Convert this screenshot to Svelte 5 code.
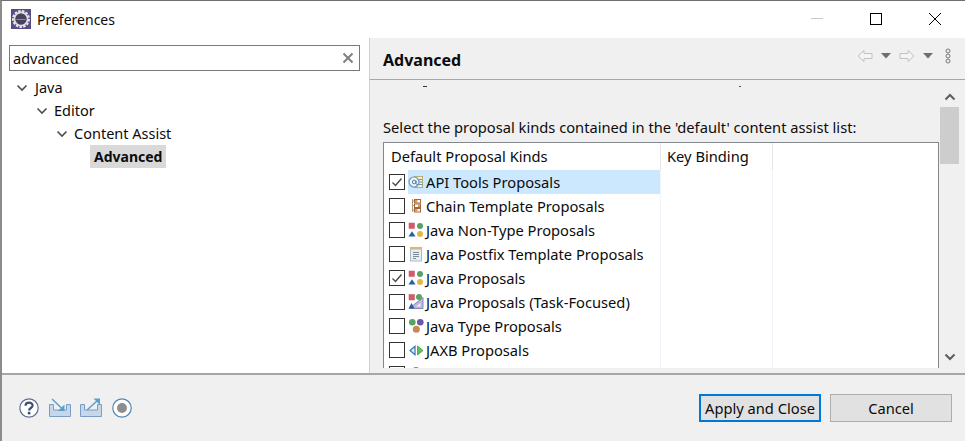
<script>
  const proposals = [
    { label: 'API Tools Proposals', icon: 'api', checked: true, selected: true },
    { label: 'Chain Template Proposals', icon: 'chain' },
    { label: 'Java Non-Type Proposals', icon: 'shapes' },
    { label: 'Java Postfix Template Proposals', icon: 'doc' },
    { label: 'Java Proposals', icon: 'shapes', checked: true },
    { label: 'Java Proposals (Task-Focused)', icon: 'task' },
    { label: 'Java Type Proposals', icon: 'type' },
    { label: 'JAXB Proposals', icon: 'jaxb' },
    { label: '', icon: 'cut' }
  ];
</script>

{#snippet chevron()}
  <svg class="chevron" width="12" height="8" viewBox="0 0 12 8"><path d="M1.5 1.5 6 6l4.5-4.5" fill="none" stroke="#4d4d4d" stroke-width="1.6" /></svg>
{/snippet}

{#snippet icon(name)}
  <svg class="kind" width="16" height="16" viewBox="0 0 16 16">
    {#if name === 'api'}
      <rect x="6.500" y="2.500" width="8" height="11" fill="#f6f1d6" stroke="#b5ad7c" />
      <path d="M8 5.500h6M9 8h5.500M9 10.500h5.500" stroke="#6f94b5" />
      <circle cx="6" cy="8" r="5" fill="#eef5fb" stroke="#6f94b5" stroke-width="1.200" />
      <circle cx="6.200" cy="8" r="1.800" fill="none" stroke="#4f7ca3" />
      <path d="M8 6.500v3c0 1 1 1.200 2 .7" fill="none" stroke="#4f7ca3" />
    {:else if name === 'chain'}
      <path d="M4.500 1v13" stroke="#a89a80" />
      <path d="M4.500 3h2M4.500 7.500h2M4.500 12h2" stroke="#a89a80" />
      <rect x="6.500" y="1.500" width="6" height="3.500" fill="#fff" stroke="#a5673a" />
      <rect x="6.500" y="6" width="6" height="3.500" fill="#fff" stroke="#a5673a" />
      <rect x="6.500" y="10.500" width="6" height="3.500" fill="#fff" stroke="#a5673a" />
      <path d="M7 2h2.500v3H7zM10 6.500h2v2.500h-2zM7 11h2.500v2.500H7z" fill="#dd9a55" />
    {:else if name === 'shapes'}
      <rect x="1" y="1" width="5.500" height="5.500" fill="#dc5a68" stroke="#bb5566" stroke-width="0.500" />
      <circle cx="12" cy="4" r="3" fill="#57a265" />
      <path d="M4 9.200 7.500 14.500H.5z" fill="#1f5ea8" />
      <circle cx="12" cy="12" r="3" fill="#e8b548" />
    {:else if name === 'doc'}
      <rect x="2.500" y="1.500" width="11" height="13.500" fill="#e2edf6" stroke="#aeb9c2" />
      <rect x="2" y="1" width="12" height="2.500" fill="#d5b878" />
      <path d="M5 6.500h6M5 8.500h6M5 10.500h6M5 12.500h3" stroke="#7e8c99" />
    {:else if name === 'task'}
      <path d="M15 3.500V14.500H1z" fill="#bdb8da" stroke="#8d87b8" />
      <path d="M12.500 9v3.500H8z" fill="#f0eff8" />
      <rect x="1" y="0.500" width="5.500" height="5.500" fill="#dc5a68" stroke="#bb5566" stroke-width="0.500" />
      <circle cx="11" cy="3" r="3" fill="#57a265" />
      <path d="M3.500 9 6.500 14.500H.5z" fill="#1f5ea8" />
    {:else if name === 'type'}
      <circle cx="4.300" cy="4.300" r="3.300" fill="#57a265" />
      <circle cx="12.300" cy="4.300" r="3.300" fill="#6a5aa6" />
      <circle cx="8.300" cy="11.300" r="3.500" fill="#c48a50" />
    {:else if name === 'jaxb'}
      <path d="M7 4.200V12.800L2 8.500z" fill="#dcebf6" stroke="#2f74b5" stroke-width="1.200" />
      <path d="M9.500 4V13L15 8.500z" fill="#62c262" stroke="#3f9a3f" stroke-width="0.800" />
    {:else if name === 'cut'}
      <circle cx="8" cy="6" r="4.500" fill="#bcd5ea" stroke="#4f86b5" />
    {/if}
  </svg>
{/snippet}

<div class="window">
  <span class="sliver"></span>

  <header class="titlebar">
    <svg class="app-icon" width="20" height="20" viewBox="0 0 20 20">
      <rect width="20" height="20" fill="#5a4a85" />
      <circle cx="10" cy="10" r="7.500" fill="none" stroke="#e6e6e6" stroke-width="3" stroke-dasharray="2.400 1.200" />
      <circle cx="10" cy="10" r="6.500" fill="none" stroke="#dcdcdc" stroke-width="1.800" />
      <circle cx="10" cy="10" r="5.500" fill="#47435f" />
      <path d="M5.500 10.500h9" stroke="#8a86a8" />
    </svg>
    <span class="title">Preferences</span>
    <div class="controls">
      <svg width="14" height="14" viewBox="0 0 14 14"><path d="M1 6.500h12" stroke="#c9c9c9" /></svg>
      <svg width="14" height="14" viewBox="0 0 14 14"><rect x="1.500" y="1.500" width="11" height="11" fill="none" stroke="#000" /></svg>
      <svg width="14" height="14" viewBox="0 0 14 14"><path d="M1 1l12 12M13 1 1 13" stroke="#000" /></svg>
    </div>
  </header>

  <div class="body">
    <aside class="left">
      <div class="search">
        <span>advanced</span>
        <svg width="12" height="12" viewBox="0 0 12 12"><path d="M1.500 1.500l9 9M10.500 1.500l-9 9" stroke="#7f7f7f" stroke-width="2" /></svg>
      </div>
      <ul class="tree">
        <li class="level0">{@render chevron()}Java</li>
        <li class="level1">{@render chevron()}Editor</li>
        <li class="level2">{@render chevron()}Content Assist</li>
        <li class="level3"><b>Advanced</b></li>
      </ul>
    </aside>

    <main class="right">
      <div class="page-head">
        <h1>Advanced</h1>
        <div class="toolbar">
          <svg width="16" height="14" viewBox="0 0 16 14"><path d="M1 7l6-5.500V4.500h8v5H7v3z" fill="#f4f4f4" stroke="#c2c2c2" /></svg>
          <svg class="spaced" width="10" height="6" viewBox="0 0 10 6"><path d="M0 0h10L5 5.500z" fill="#6e6e6e" /></svg>
          <svg class="spaced" width="16" height="14" viewBox="0 0 16 14"><path d="M15 7 9 1.500V4.500H1v5h8v3z" fill="#f4f4f4" stroke="#c2c2c2" /></svg>
          <svg class="spaced" width="10" height="6" viewBox="0 0 10 6"><path d="M0 0h10L5 5.500z" fill="#6e6e6e" /></svg>
          <svg class="more" width="6" height="16" viewBox="0 0 6 16"><g fill="none" stroke="#777"><circle cx="3" cy="3" r="2" /><circle cx="3" cy="8" r="2" /><circle cx="3" cy="13" r="2" /></g></svg>
        </div>
      </div>

      <div class="scroller">
        <div class="content">
          <div class="clipped"><i class="dash"></i><i class="dot"></i></div>
          <p class="label">Select the proposal kinds contained in the 'default' content assist list:</p>
          <div class="table">
            <div class="thead">
              <span class="col-name">Default Proposal Kinds</span>
              <span class="col-key">Key Binding</span>
              <span class="col-rest"></span>
            </div>
            {#each proposals as row}
              <div class="row">
                <div class="col-name">
                  <span class="check">
                    {#if row.checked}
                      <svg width="14" height="14" viewBox="0 0 14 14"><path d="M2.500 7.500 5.500 10.500 11.500 3.500" fill="none" stroke="#4a4a4a" stroke-width="1.400" /></svg>
                    {/if}
                  </span>
                  <div class="cell" class:selected={row.selected}>
                    {@render icon(row.icon)}
                    <span>{row.label}</span>
                  </div>
                </div>
                <span class="col-key"></span>
                <span class="col-rest"></span>
              </div>
            {/each}
          </div>
        </div>

        <div class="scrollbar">
          <svg width="12" height="8" viewBox="0 0 12 8"><path d="M1.500 6.500 6 2l4.500 4.500" fill="none" stroke="#5c5c5c" stroke-width="2" /></svg>
          <div class="track"><div class="thumb"></div></div>
          <svg width="12" height="8" viewBox="0 0 12 8"><path d="M1.500 1.500 6 6l4.500-4.500" fill="none" stroke="#5c5c5c" stroke-width="2" /></svg>
        </div>
      </div>
    </main>
  </div>

  <footer class="footer">
    <div class="tools">
      <svg width="20" height="20" viewBox="0 0 20 20">
        <circle cx="10" cy="10" r="9.200" fill="#fff" stroke="#5f6f92" stroke-width="1.200" />
        <path d="M6.500 7.800C6.500 3.600 13.600 3.600 13.600 7.600c0 2.400-3.500 2.400-3.500 4.800" fill="none" stroke="#3f4f72" stroke-width="2.200" />
        <rect x="8.800" y="13.800" width="2.600" height="2.600" fill="#3f4f72" />
      </svg>
      <svg class="tray" width="22" height="20" viewBox="0 0 22 20">
        <path d="M.5 6.500h4V12h13V6.500h4v12H.5z" fill="#c6d7ea" stroke="#7d9cc4" />
        <path d="M3 1l10 9.500" stroke="#5aa0c8" stroke-width="1.500" />
        <path d="M15.500 13V6.500L9 13z" fill="#5aa0c8" />
      </svg>
      <svg class="tray tight" width="22" height="20" viewBox="0 0 22 20">
        <path d="M.5 6.500h4V12h13V6.500h4v12H.5z" fill="#c6d7ea" stroke="#7d9cc4" />
        <path d="M7 12 17 3" stroke="#5aa0c8" stroke-width="1.500" />
        <path d="M20 .5h-6.500L20 7z" fill="#5aa0c8" />
      </svg>
      <svg width="20" height="20" viewBox="0 0 20 20">
        <circle cx="10" cy="10" r="9.200" fill="#fff" stroke="#4f86b5" stroke-width="1.200" />
        <circle cx="10" cy="10" r="5" fill="#8e8e8e" />
      </svg>
    </div>
    <div class="buttons">
      <button class="primary">Apply and Close</button>
      <button>Cancel</button>
    </div>
  </footer>
</div>

<style>
  :global(body) {
    margin: 0;
    background: #fff;
  }

  .window {
    position: relative;
    width: 965px;
    height: 441px;
    display: flex;
    flex-direction: column;
    box-sizing: border-box;
    border-top: 1px solid #707070;
    border-left: 2px solid #8c8c8c;
    overflow: hidden;
    font-family: "Noto Sans", sans-serif;
    font-size: 14.7px;
    color: #0c0c0c;
  }

  /* bit of whatever window sits behind this one */
  .sliver {
    position: absolute;
    left: -2px;
    top: 219px;
    width: 2px;
    height: 26px;
    background: #0a6fc0;
  }

  .titlebar {
    height: 37px;
    flex: none;
    box-sizing: border-box;
    padding: 0 0 1px 9px;
    display: flex;
    align-items: center;
    background: #fff;
  }

  .app-icon {
    margin-right: 6px;
  }

  .title {
    font-size: 14px;
  }

  .controls {
    margin-left: auto;
    display: flex;
    gap: 45px;
    padding-right: 23px;
  }

  .body {
    flex: 1;
    min-height: 0;
    display: flex;
    border-bottom: 2px solid #a6a6a6;
    background: #f0f0f0;
  }

  .left {
    width: 368px;
    flex: none;
    background: #fff;
    border-right: 1px solid #d0d0d0;
    padding: 7px 0 0 7px;
    box-sizing: border-box;
    font-size: 14.5px;
  }

  .search {
    width: 351px;
    height: 26px;
    box-sizing: border-box;
    border: 1px solid #7a7a7a;
    display: flex;
    align-items: center;
    justify-content: space-between;
    padding: 0 5px 0 3px;
  }

  .tree {
    list-style: none;
    margin: 5px 0 0;
    padding: 0;
  }

  .tree li {
    height: 23px;
    line-height: 23px;
    display: flex;
    align-items: center;
  }

  .chevron {
    margin-right: 6px;
  }

  .level0 .chevron {
    margin-right: 7px;
  }

  .level0 { padding-left: 7px; }
  .level1 { padding-left: 27px; }
  .level2 { padding-left: 47px; }
  .level3 { padding-left: 81px; }

  .level3 b {
    background: #d9d9d9;
    padding: 0 4px;
    font-size: 14px;
    line-height: 23px;
  }

  .right {
    flex: 1;
    min-width: 0;
    display: flex;
    flex-direction: column;
  }

  .page-head {
    height: 42px;
    flex: none;
    box-sizing: border-box;
    border-bottom: 1px solid #a6a6a6;
    display: flex;
    justify-content: space-between;
    padding: 0 14px 0 13px;
  }

  h1 {
    margin: 0;
    padding-top: 12px;
    font-size: 16px;
    line-height: 20px;
    font-weight: 700;
  }

  .toolbar {
    display: flex;
    align-items: center;
    align-self: flex-start;
    padding-top: 10px;
  }

  .spaced {
    margin-left: 8px;
  }

  .more {
    margin-left: 12px;
  }

  .scroller {
    flex: 1;
    min-height: 0;
    display: flex;
    padding-right: 6px;
  }

  .content {
    flex: 1;
    min-width: 0;
    overflow: hidden;
    margin-bottom: 5px;
    padding-left: 13px;
  }

  .clipped {
    height: 37px;
    display: flex;
    align-items: flex-start;
  }

  .dash {
    margin: 6px 0 0 40px;
    width: 4px;
    height: 1px;
    background: #333;
  }

  .dot {
    margin: 6px 0 0 312px;
    width: 2px;
    height: 1px;
    background: #555;
  }

  .label {
    margin: 0;
    height: 25px;
    line-height: 20px;
    white-space: nowrap;
  }

  .table {
    width: 556px;
    box-sizing: border-box;
    background: #fff;
    border: 1px solid #82878c;
    border-bottom: 0;
  }

  .thead,
  .row {
    display: grid;
    grid-template-columns: 277px 112px 1fr;
  }

  .thead {
    height: 27px;
  }

  .thead span {
    line-height: 26px;
    padding-left: 7px;
    border-right: 1px solid #e5e5e5;
  }

  .thead .col-key {
    padding-left: 6px;
  }

  .thead .col-rest {
    border-right: 0;
  }

  .row {
    height: 24px;
  }

  .row .col-name {
    display: flex;
    align-items: center;
    border-right: 1px solid #f0f5fc;
    padding-left: 5px;
  }

  .row .col-key {
    border-right: 1px solid #f0f5fc;
  }

  .check {
    width: 16px;
    height: 16px;
    flex: none;
    box-sizing: border-box;
    border: 1px solid #333;
    background: #fff;
    display: flex;
    align-items: center;
    justify-content: center;
    margin-right: 3px;
  }

  .cell {
    flex: 1;
    height: 24px;
    display: flex;
    align-items: center;
    white-space: nowrap;
    gap: 2px;
  }

  .selected {
    background: #cce8ff;
  }

  .scrollbar {
    width: 19px;
    flex: none;
    display: flex;
    flex-direction: column;
    align-items: center;
    padding-top: 13px;
    box-sizing: border-box;
  }

  .track {
    flex: 1;
    width: 100%;
    padding-top: 6px;
  }

  .thumb {
    height: 57px;
    background: #cdcdcd;
  }

  .scrollbar svg:last-child {
    margin-bottom: 12px;
  }

  .footer {
    height: 66px;
    flex: none;
    display: flex;
    align-items: center;
    justify-content: space-between;
    background: #f0f0f0;
    padding: 0 13px 0 17px;
  }

  .tools {
    display: flex;
    align-items: center;
    gap: 10px;
  }

  .tray.tight {
    margin-left: -1px;
  }

  .buttons {
    display: flex;
    gap: 9px;
  }

  button {
    width: 122px;
    height: 28px;
    padding: 0;
    font: inherit;
    color: inherit;
    background: #e1e1e1;
    border: 1px solid #adadad;
  }

  .primary {
    border: 2px solid #0078d7;
  }
</style>
